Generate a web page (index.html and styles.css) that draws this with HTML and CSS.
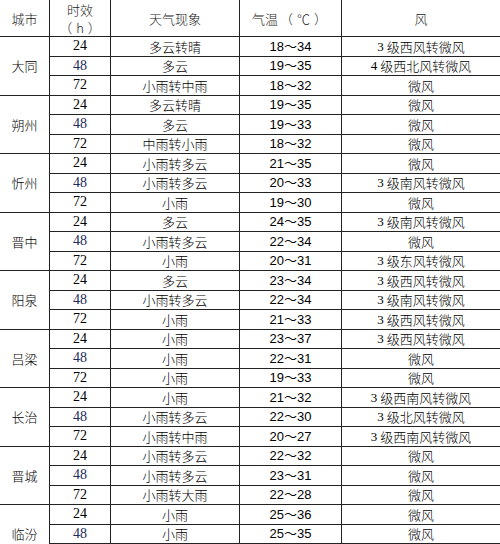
FILE: index.html
```html
<!DOCTYPE html>
<html lang="zh">
<head>
<meta charset="utf-8">
<link rel="stylesheet" href="styles.css">
</head>
<body>
<div class="grid">
  <div class="c hd">城市</div>
  <div class="c hd two"><span>时效</span><span><span class="po">（</span>h<span class="pc">）</span></span></div>
  <div class="c hd">天气现象</div>
  <div class="c hd">气温<span class="po">（</span>℃<span class="pc">）</span></div>
  <div class="c hd">风</div>

  <div class="c city">大同</div>
  <div class="c n">24</div><div class="c">多云转晴</div><div class="c t">18～34</div><div class="c"><span class="d">3</span>级西风转微风</div>
  <div class="c n b">48</div><div class="c">多云</div><div class="c t">19～35</div><div class="c"><span class="d">4</span>级西北风转微风</div>
  <div class="c n">72</div><div class="c">小雨转中雨</div><div class="c t">18～32</div><div class="c">微风</div>

  <div class="c city">朔州</div>
  <div class="c n">24</div><div class="c">多云转晴</div><div class="c t">19～35</div><div class="c">微风</div>
  <div class="c n b">48</div><div class="c">多云</div><div class="c t">19～33</div><div class="c">微风</div>
  <div class="c n">72</div><div class="c">中雨转小雨</div><div class="c t">18～32</div><div class="c">微风</div>

  <div class="c city">忻州</div>
  <div class="c n">24</div><div class="c">小雨转多云</div><div class="c t">21～35</div><div class="c">微风</div>
  <div class="c n b">48</div><div class="c">小雨转多云</div><div class="c t">20～33</div><div class="c"><span class="d">3</span>级南风转微风</div>
  <div class="c n">72</div><div class="c">小雨</div><div class="c t">19～30</div><div class="c">微风</div>

  <div class="c city">晋中</div>
  <div class="c n">24</div><div class="c">多云</div><div class="c t">24～35</div><div class="c"><span class="d">3</span>级南风转微风</div>
  <div class="c n b">48</div><div class="c">小雨转多云</div><div class="c t">22～34</div><div class="c">微风</div>
  <div class="c n">72</div><div class="c">小雨</div><div class="c t">20～31</div><div class="c"><span class="d">3</span>级东风转微风</div>

  <div class="c city">阳泉</div>
  <div class="c n">24</div><div class="c">多云</div><div class="c t">23～34</div><div class="c"><span class="d">3</span>级西风转微风</div>
  <div class="c n b">48</div><div class="c">小雨转多云</div><div class="c t">22～34</div><div class="c"><span class="d">3</span>级南风转微风</div>
  <div class="c n">72</div><div class="c">小雨</div><div class="c t">21～33</div><div class="c"><span class="d">3</span>级西风转微风</div>

  <div class="c city">吕梁</div>
  <div class="c n">24</div><div class="c">小雨</div><div class="c t">23～37</div><div class="c"><span class="d">3</span>级西风转微风</div>
  <div class="c n b">48</div><div class="c">小雨</div><div class="c t">22～31</div><div class="c">微风</div>
  <div class="c n">72</div><div class="c">小雨</div><div class="c t">19～33</div><div class="c">微风</div>

  <div class="c city">长治</div>
  <div class="c n">24</div><div class="c">小雨</div><div class="c t">21～32</div><div class="c"><span class="d">3</span>级西南风转微风</div>
  <div class="c n b">48</div><div class="c">小雨转多云</div><div class="c t">22～30</div><div class="c"><span class="d">3</span>级北风转微风</div>
  <div class="c n">72</div><div class="c">小雨转中雨</div><div class="c t">20～27</div><div class="c"><span class="d">3</span>级西南风转微风</div>

  <div class="c city">晋城</div>
  <div class="c n">24</div><div class="c">小雨转多云</div><div class="c t">22～32</div><div class="c">微风</div>
  <div class="c n b">48</div><div class="c">小雨转多云</div><div class="c t">23～31</div><div class="c">微风</div>
  <div class="c n">72</div><div class="c">小雨转大雨</div><div class="c t">22～28</div><div class="c">微风</div>

  <div class="c city">临汾</div>
  <div class="c n">24</div><div class="c">小雨</div><div class="c t">25～36</div><div class="c">微风</div>
  <div class="c n b">48</div><div class="c">小雨</div><div class="c t">25～35</div><div class="c">微风</div>
  <div class="c n">72</div><div class="c">小雨</div><div class="c t">24～33</div><div class="c">微风</div>
</div>
</body>
</html>
```
FILE: styles.css
```css
html, body {
  margin: 0;
  padding: 0;
  background: #fff;
  overflow: hidden;
}
body {
  width: 500px;
  height: 544px;
}
.grid {
  display: grid;
  grid-template-columns: 49px 60px 128px 101px 1fr;
  grid-template-rows: 36px repeat(27, 18.5px);
  gap: 1px;
  background: #222;
  width: 500px;
  font-family: "Noto Sans CJK SC", "Liberation Sans", sans-serif;
  font-weight: 300;
  font-size: 13px;
  color: #000;
}
.c {
  background: #fff;
  display: flex;
  align-items: center;
  justify-content: center;
  line-height: 1;
  white-space: nowrap;
}
.hd {
  color: #1a1a1a;
}
.two {
  flex-direction: column;
  gap: 5px;
}
.two > span {
  display: flex;
  line-height: 13px;
}
.po {
  margin-left: 2px;
  margin-right: 4px;
}
.pc {
  margin-left: 4px;
  margin-right: 2px;
}
.city {
  grid-row: span 3;
  grid-column: 1;
}
.n {
  font-family: "Liberation Serif", serif;
  font-weight: 400;
  font-size: 14px;
}
.b {
  color: #1d2a5a;
}
.t {
  font-family: "Liberation Sans", "Noto Sans CJK SC", sans-serif;
  font-weight: 400;
  font-size: 13px;
}
.d {
  font-family: "Liberation Serif", serif;
  font-weight: 400;
  font-size: 13px;
  margin-right: 3px;
}
```
